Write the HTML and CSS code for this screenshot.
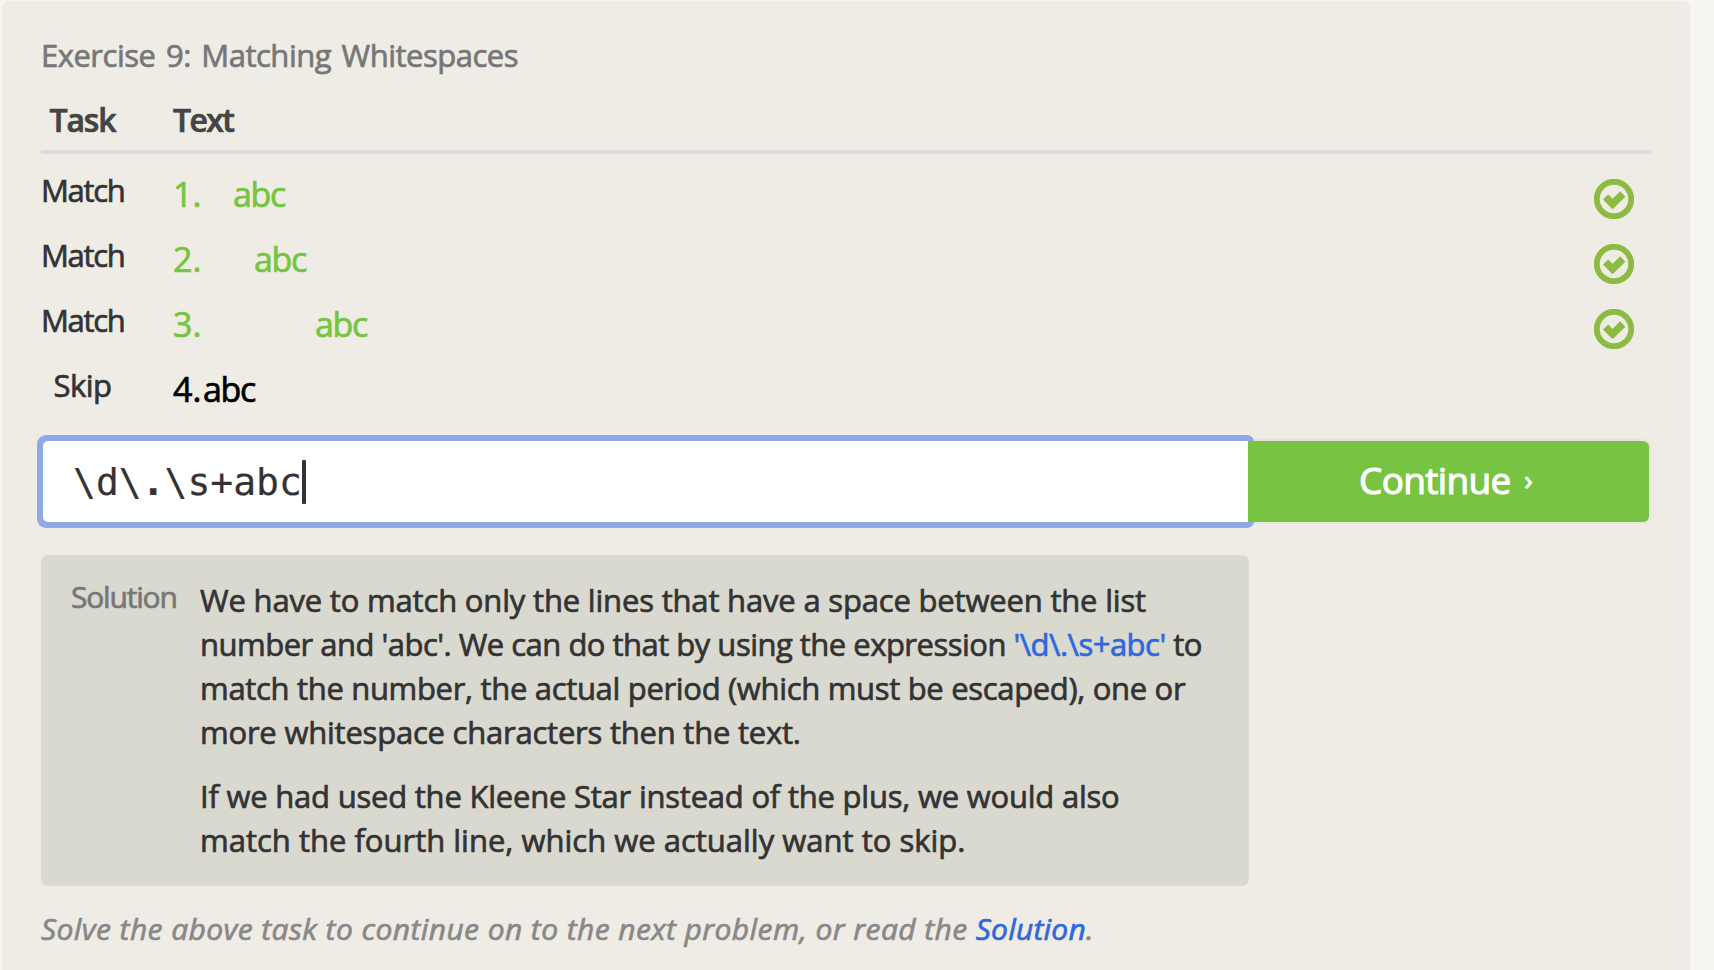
FILE: index.html
```html
<!DOCTYPE html>
<html lang="en">
<head>
<meta charset="utf-8">
<title>Exercise 9: Matching Whitespaces</title>
<link rel="stylesheet" href="styles.css">
</head>
<body>
<main class="panel">
  <h1 class="title">Exercise 9: Matching Whitespaces</h1>
  <div class="head"><div class="task">Task</div><div>Text</div></div>
  <div class="rows">
    <div class="row">
      <div class="task">Match</div>
      <div class="text ok"><span class="num">1.</span><span class="gap-s">abc</span></div>
      <svg class="check" viewBox="0 0 40 40"><circle cx="20" cy="20" r="17.2"/><path d="M11.6 18l7 7L28.800 15"/></svg>
    </div>
    <div class="row">
      <div class="task">Match</div>
      <div class="text ok"><span class="num">2.</span><span class="gap-m">abc</span></div>
      <svg class="check" viewBox="0 0 40 40"><circle cx="20" cy="20" r="17.2"/><path d="M11.6 18l7 7L28.800 15"/></svg>
    </div>
    <div class="row">
      <div class="task">Match</div>
      <div class="text ok"><span class="num">3.</span><span class="gap-l">abc</span></div>
      <svg class="check" viewBox="0 0 40 40"><circle cx="20" cy="20" r="17.2"/><path d="M11.6 18l7 7L28.800 15"/></svg>
    </div>
    <div class="row">
      <div class="task skip">Skip</div>
      <div class="text"><span class="num">4.</span><span>abc</span></div>
    </div>
  </div>
  <div class="entry">
    <div class="field"><span>\d\<b>.</b>\s+abc</span><i class="caret"></i></div>
    <div class="button"><span>Continue</span><span class="arrow">›</span></div>
  </div>
  <section class="solution">
    <div class="label">Solution</div>
    <div class="copy">
      <p><span class="l1">We have to match only the lines that have a space between the list</span><br>
      <span class="l2">number and 'abc'. We can do that by using the expression <b>'\d\.\s+abc'</b> to</span><br>
      <span class="l3">match the number, the actual period (which must be escaped), one or</span><br>
      <span class="l4">more whitespace characters then the text.</span></p>
      <p><span class="l4">If we had used the Kleene Star instead of the plus, we would also</span><br>
      <span>match the fourth line, which we actually want to skip.</span></p>
    </div>
  </section>
  <p class="note">Solve the above task to continue on to the next problem, or read the <a>Solution</a>.</p>
</main>
</body>
</html>
```
FILE: styles.css
```css
* { box-sizing: border-box; }
body { margin: 0; background: #f6f5f1; font-family: "Open Sans", sans-serif; color: #333; -webkit-text-stroke: 0.700px; }
.panel { width: 1688px; height: 969px; margin: 1px 0 0 2px; padding: 32px 39px 0; background: #efece5; border-radius: 7px 7px 0 0; overflow: hidden; }
.title { margin: 0; font-size: 31px; font-weight: 400; line-height: 44px; letter-spacing: -0.500px; word-spacing: 3px; color: #777; }
.head, .row { display: grid; grid-template-columns: 83px 1fr 40px; column-gap: 49px; }
.head { height: 77px; padding-top: 25px; border-bottom: 4px solid #dcdcdc; font-size: 32px; font-weight: 600; line-height: 36px; letter-spacing: -1.100px; color: #444; }
.head > :last-child { letter-spacing: -1.600px; }
.task { text-align: center; white-space: nowrap; }
.rows { padding-top: 8px; }
.row { height: 65px; width: 1593px; }
.row .task { padding-top: 10px; font-size: 31px; line-height: 36px; letter-spacing: -1.300px; }
.row .skip { letter-spacing: -0.5px; }
.text { display: flex; padding-top: 13px; font-size: 34px; line-height: 38px; letter-spacing: -1.300px; color: #000; }
.ok { color: #76c442; }
.num { width: 30px; letter-spacing: 0; }
.gap-s { margin-left: 30px; }
.gap-m { margin-left: 51px; }
.gap-l { margin-left: 112px; }
.check { width: 40px; height: 40px; margin-top: 17px; fill: none; stroke: #8bbb40; stroke-width: 5.800; }
.check path { stroke-width: 7.400; }
.entry { position: relative; z-index: 0; display: flex; width: 1606px; height: 81px; margin: 19px 0 0 2px; }
.field { position: relative; display: flex; align-items: center; width: 1205px; padding-left: 30px; background: #fff; border-radius: 5px 0 0 5px; font: 38px "DejaVu Sans Mono", monospace; -webkit-text-stroke: 0.200px; }
/* focus ring around the field */
.field::before { content: ""; position: absolute; z-index: -1; inset: -6px; border-radius: 9px 7px 7px 9px; background: #8ea8e8; }
.field { z-index: auto; background: none; }
.field::after { content: ""; position: absolute; z-index: -1; inset: 0; border-radius: 5px 0 0 5px; background: #fff; }
.caret { width: 4px; height: 44px; border-radius: 1px; background: #333; }
.button { position: relative; display: flex; justify-content: center; gap: 14px; width: 401px; padding-right: 6px; background: #76c442; border-radius: 0 6px 6px 0; color: #fff; font-size: 37px; line-height: 77px; letter-spacing: -0.700px; -webkit-text-stroke: 1.100px; }
.entry::before { content: ""; position: absolute; z-index: -2; inset: -2px -2px -2px 1205px; border-radius: 0 8px 8px 0; background: #e7e4dd; }
.arrow { font-size: 27px; }
.solution { display: flex; width: 1208px; height: 331px; margin-top: 33px; padding: 19px 0 0 30px; background: #d9d9d0; border-radius: 7px; }
.label { width: 129px; padding-top: 1px; font-size: 30px; line-height: 44px; letter-spacing: -1.200px; color: #777; }
.copy { padding-top: 4px; font-size: 31px; line-height: 44px; white-space: nowrap; }
.copy p { margin: 0 0 20px; }
.copy b, .note a { font-weight: inherit; color: #2f67dd; }
.l1 { letter-spacing: -0.180px; }
.l2 { letter-spacing: -0.510px; }
.l3 { letter-spacing: -0.320px; }
.l4 { letter-spacing: -0.220px; }
.note { margin: 21px 0 0; font-size: 30px; line-height: 44px; font-style: italic; letter-spacing: 0.410px; color: #888; }
.note a { letter-spacing: 0.200px; }
```
